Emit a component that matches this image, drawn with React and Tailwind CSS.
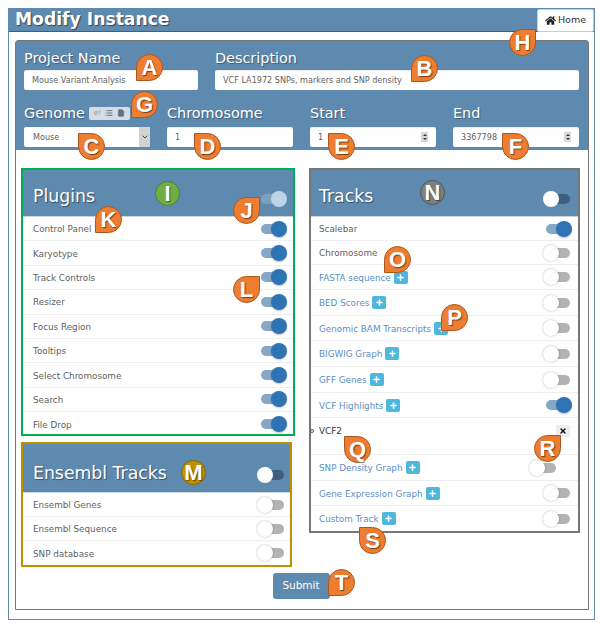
import React from "react";
import { Plus, X, List, File, ChevronDown } from "lucide-react";
import { FaHome } from "react-icons/fa";

const font = { fontFamily: '"DejaVu Sans", sans-serif' };

function Toggle({ on, dim, dark, className = "" }) {
  const track = on
    ? dim ? "bg-[#7fa0bd]" : "bg-[#86a8c8]"
    : dark ? "bg-[#3e5f7f]" : "bg-[#b3b3b3]";
  return (
    <div className={`relative w-[24px] h-[10px] rounded-full shrink-0 ${track} ${className}`}>
      <div
        className={`absolute top-[-3px] w-[16px] h-[16px] rounded-full ${
          on
            ? dim ? "right-[-2px] bg-[#bdd3e6]" : "right-[-2px] bg-[#2e74b5] shadow-[0_1px_2px_rgba(0,0,0,0.25)]"
            : dark ? "left-[-3px] bg-white" : "left-[-3px] bg-white shadow-[0_0_2px_rgba(0,0,0,0.35)]"
        }`}
      />
    </div>
  );
}

function Row({ h = "h-[24.4px]", children, on, link, plus, pl = "pl-[8px]", pr = "pr-[8px]" }) {
  return (
    <div className={`flex items-center justify-between ${h} ${pl} ${pr} border-b border-[#eeeeee] last:border-b-0`}>
      <div className="flex items-center gap-[3px]">
        <span className={`text-[8.8px] leading-none mt-[2px] ${link ? "text-[#5b8fc4]" : "text-[#5f5f5f]"}`}>{children}</span>
        {plus && (
          <span className="w-[14px] h-[13px] rounded-[2px] bg-[#4fb6dc] flex items-center justify-center">
            <Plus size={9} strokeWidth={4} color="white" />
          </span>
        )}
      </div>
      <Toggle on={on} />
    </div>
  );
}

function PanelHead({ title, toggle, h = "h-[47px]", pl = "pl-[8px]", pr = "pr-[8px]", textMt = "mt-[7px]", toggleMt = "mt-[11px]" }) {
  return (
    <div className={`${h} bg-[#5f8ab0] flex items-center justify-between ${pl} ${pr} border-b border-[#c8d4de]`}>
      <span className={`text-[17.3px] text-white ${textMt} [text-shadow:1px_1px_1px_rgba(0,0,0,0.45)]`}>{title}</span>
      <div className={toggleMt}>{toggle}</div>
    </div>
  );
}

const labelCls = "block text-[14.4px] leading-[18px] text-white [text-shadow:1px_1px_1px_rgba(0,0,0,0.35)]";
const inputCls = "h-[20px] rounded-[2px] bg-white flex items-center px-[8px] text-[8.1px] text-[#5f5f5f] shadow-[inset_0_1px_1px_rgba(0,0,0,0.08)]";

function Spin({ value }) {
  return (
    <div className={`${inputCls} justify-between`}>
      <span>{value}</span>
      <span className="w-[7px] h-[10px] bg-[#d8d8d8] flex flex-col items-center justify-center gap-[2px]">
        <span className="w-0 h-0 border-x-[2px] border-x-transparent border-b-[2px] border-b-[#333333]" />
        <span className="w-0 h-0 border-x-[2px] border-x-transparent border-t-[2px] border-t-[#333333]" />
      </span>
    </div>
  );
}

const markerPos = {
  A: "left-[136px] top-[54px] rounded-[50%_50%_50%_0]",
  B: "left-[411px] top-[55px] rounded-[50%_50%_50%_0]",
  C: "left-[78px] top-[133px] rounded-[0_50%_50%_50%]",
  D: "left-[194px] top-[133px] rounded-[0_50%_50%_50%]",
  E: "left-[328px] top-[133px] rounded-[0_50%_50%_50%]",
  F: "left-[502px] top-[133px] rounded-[0_50%_50%_50%]",
  G: "left-[131px] top-[91px] rounded-[50%_50%_50%_0]",
  H: "left-[509px] top-[29px] rounded-[50%_0_50%_50%]",
  J: "left-[233px] top-[197px] rounded-[50%_0_50%_50%]",
  K: "left-[95px] top-[206px] rounded-[50%_50%_50%_0]",
  L: "left-[233px] top-[276px] rounded-[50%_0_50%_50%]",
  O: "left-[384px] top-[246px] rounded-[50%_50%_50%_0]",
  P: "left-[441px] top-[304px] rounded-[50%_50%_50%_0]",
  Q: "left-[344px] top-[436px] rounded-[0_50%_50%_50%]",
  R: "left-[534px] top-[435px] rounded-[50%_0_50%_50%]",
  S: "left-[359px] top-[527px] rounded-[0_50%_50%_50%]",
  T: "left-[328px] top-[569px] rounded-[50%_50%_50%_0]",
};

function Marker({ k }) {
  return (
    <div
      className={`absolute w-[27px] h-[27px] bg-[#ed7d31] border border-[#a9561f] flex items-center justify-center text-white font-bold text-[22px] leading-none [text-shadow:1px_1px_1px_rgba(0,0,0,0.5)] ${markerPos[k]}`}
      style={{ fontFamily: '"Liberation Sans", sans-serif' }}
    >
      {k}
    </div>
  );
}

function Circle({ k, className }) {
  return (
    <div
      className={`absolute w-[25px] h-[25px] rounded-full border flex items-center justify-center text-white font-bold text-[22px] leading-none [text-shadow:1px_1px_1px_rgba(0,0,0,0.5)] ${className}`}
      style={{ fontFamily: '"Liberation Sans", sans-serif' }}
    >
      {k}
    </div>
  );
}

export default function App() {
  return (
    <div className="relative w-[601px] h-[623px] bg-white pt-[8px] pl-[8px]" style={font}>
      <div className="w-[587px] h-[612px] border border-[#5f8ab0] flex flex-col">
        {/* title bar */}
        <div className="h-[23px] bg-[#5f8ab0] border-b border-[#3f5f7c] flex items-center justify-between pl-[6px] shrink-0">
          <span className="text-[17.2px] font-bold text-white [text-shadow:1px_1px_1px_rgba(0,0,0,0.5)]">Modify Instance</span>
          <div className="w-[57px] h-[23px] bg-white border border-[#cccccc] rounded-[2px] flex items-center justify-center gap-[2px] text-[9.5px] text-[#333333] mt-[1px]">
            <FaHome size={11} color="#222222" />
            <span>Home</span>
          </div>
        </div>

        {/* inner panel */}
        <div className="ml-[6px] mt-[8px] w-[574px] h-[570px] border border-[#777777] rounded-t-[3px] flex flex-col">
          <div className="h-[109px] bg-[#5f8ab0] pl-[8px] pr-[8px] pt-[8px] shrink-0">
            <div className="flex gap-[17px]">
              <div className="w-[174px]">
                <span className={labelCls}>Project Name</span>
                <div className={`${inputCls} mt-[3px]`}>Mouse Variant Analysis</div>
              </div>
              <div className="w-[364px]">
                <span className={labelCls}>Description</span>
                <div className={`${inputCls} mt-[3px]`}>VCF LA1972 SNPs, markers and SNP density</div>
              </div>
            </div>
            <div className="flex gap-[17px] mt-[14px]">
              <div className="w-[126px]">
                <div className="flex items-center gap-[4px]">
                  <span className={labelCls}>Genome</span>
                  <span className="w-[41px] h-[13px] rounded-[2px] bg-[#d4dde5] flex items-center justify-center gap-[4px] text-[7px] text-[#8a9aa8]">
                    <span>e!</span>
                    <List size={8} color="#66727c" strokeWidth={3} />
                    <File size={8} color="#66727c" fill="#66727c" />
                  </span>
                </div>
                <div className="mt-[5px] h-[20px] rounded-[2px] bg-white flex items-center justify-between pl-[9px] text-[8.1px] text-[#5f5f5f]">
                  <span>Mouse</span>
                  <span className="w-[11px] h-[20px] bg-[#d2d2d2] flex items-center justify-center">
                    <ChevronDown size={8} color="#444444" strokeWidth={3} />
                  </span>
                </div>
              </div>
              <div className="w-[126px]">
                <span className={labelCls}>Chromosome</span>
                <div className={`${inputCls} mt-[5px]`}>1</div>
              </div>
              <div className="w-[126px]">
                <span className={labelCls}>Start</span>
                <div className="mt-[5px]"><Spin value="1" /></div>
              </div>
              <div className="w-[126px]">
                <span className={labelCls}>End</span>
                <div className="mt-[5px]"><Spin value="3367798" /></div>
              </div>
            </div>
          </div>

          <div className="flex pl-[5px] pt-[18px] gap-[14px]">
            {/* left */}
            <div className="w-[274px] flex flex-col gap-[6px]">
              <div className="w-[274px] h-[268px] border-2 border-[#00b050]">
                <PanelHead title="Plugins" pl="pl-[10px]" toggle={<Toggle on dim />} />
                {["Control Panel","Karyotype","Track Controls","Resizer","Focus Region","Tooltips","Select Chromosome","Search","File Drop"].map((t) => (
                  <Row key={t} on pl="pl-[10px]">{t}</Row>
                ))}
              </div>
              <div className="w-[271px] h-[125px] border-2 border-[#bf9000]">
                <PanelHead title="Ensembl Tracks" h="h-[49px]" pl="pl-[10px]" pr="pr-[6px]" textMt="mt-[12px]" toggleMt="mt-[14px]" toggle={<Toggle dark />} />
                <Row pl="pl-[10px]" pr="pr-[6px]" h="h-[24px]">Ensembl Genes</Row>
                <Row pl="pl-[10px]" pr="pr-[6px]" h="h-[24px]">Ensembl Sequence</Row>
                <Row pl="pl-[10px]" pr="pr-[6px]" h="h-[24px]">SNP database</Row>
              </div>
            </div>

            {/* right */}
            <div className="w-[271px] h-[365px] border-2 border-[#777777]">
              <PanelHead title="Tracks" toggle={<Toggle dark />} />
              <Row on h="h-[24px]">Scalebar</Row>
              <Row h="h-[24px]">Chromosome</Row>
              <Row link plus h="h-[25px]">FASTA sequence</Row>
              <Row link plus h="h-[26px]">BED Scores</Row>
              <Row link plus h="h-[25px]">Genomic BAM Transcripts</Row>
              <Row link plus h="h-[26px]">BIGWIG Graph</Row>
              <Row link plus h="h-[26px]">GFF Genes</Row>
              <Row link plus on h="h-[25px]">VCF Highlights</Row>
              <div className="relative h-[37px] border-b border-[#eeeeee] pl-[8px] pr-[8px] flex justify-between">
                <span className="absolute left-[-1px] top-[11px] w-[4px] h-[4px] rounded-full border border-[#555555]" />
                <span className="text-[8.8px] text-[#333333] mt-[9px] leading-none">VCF2</span>
                <span className="w-[14px] h-[12px] mt-[7px] bg-[#eeeeee] flex items-center justify-center">
                  <X size={8} strokeWidth={4} color="#111111" />
                </span>
              </div>
              <Row link plus pr="pr-[22px]" h="h-[26px]">SNP Density Graph</Row>
              <Row link plus h="h-[25px]">Gene Expression Graph</Row>
              <Row link plus h="h-[25px]">Custom Track</Row>
            </div>
          </div>

          <div className="flex justify-center mt-[6px]">
            <div className="ml-[-2px] w-[57px] h-[26px] rounded-[3px] bg-[#5f8ab0] text-white text-[10.5px] flex items-center justify-center">Submit</div>
          </div>
        </div>
      </div>

      {Object.keys(markerPos).map((k) => <Marker key={k} k={k} />)}
      <Circle k="I" className="left-[155px] top-[181px] bg-[#70ad47] border-[#4f7f30]" />
      <Circle k="N" className="left-[420px] top-[180px] bg-[#7f7f7f] border-[#555555]" />
      <Circle k="M" className="left-[181px] top-[460px] bg-[#bf9000] border-[#8a6800]" />
    </div>
  );
}
